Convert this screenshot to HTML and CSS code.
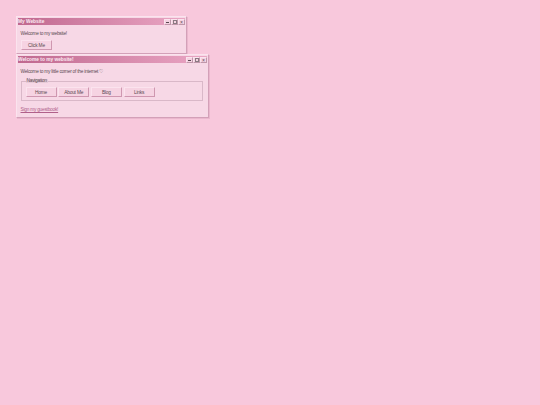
FILE: index.html
```html
<!DOCTYPE html>
<html lang="en">
<head>
  <meta charset="UTF-8">
  <title>My Website</title>
  <link rel="stylesheet" href="styles.css">
</head>
<body>
  <div class="window window-small">
    <div class="title-bar">
      <span class="title-text">My Website</span>
      <div class="title-controls">
        <button class="ctl ctl-min"><i></i></button>
        <button class="ctl ctl-max"><i></i></button>
        <button class="ctl ctl-close">×</button>
      </div>
    </div>
    <div class="window-body">
      <p class="line">Welcome to my website!</p>
      <button class="btn btn-click">Click Me</button>
    </div>
  </div>
  <div class="window window-main">
    <div class="title-bar">
      <span class="title-text">Welcome to my website!</span>
      <div class="title-controls">
        <button class="ctl ctl-min"><i></i></button>
        <button class="ctl ctl-max"><i></i></button>
        <button class="ctl ctl-close">×</button>
      </div>
    </div>
    <div class="window-body">
      <p class="line">Welcome to my little corner of the internet ♡</p>
      <fieldset class="nav-group">
        <legend>Navigation</legend>
        <div class="nav-row">
          <button class="btn">Home</button>
          <button class="btn">About Me</button>
          <button class="btn">Blog</button>
          <button class="btn">Links</button>
        </div>
      </fieldset>
      <a class="guestbook" href="#">Sign my guestbook!</a>
    </div>
  </div>
</body>
</html>
```

FILE: styles.css
```css
body {
  margin: 0;
  padding: 16px;
  background-color: #f8c8dc;
  font-family: "Liberation Sans", Arial, sans-serif;
  font-size: 4.8px;
  letter-spacing: -0.25px;
  color: #5a4a52;
}
.window {
  box-sizing: border-box;
  background-color: #f7d8e6;
  border: 1px solid;
  border-color: #fbe3ee #d3a0b8 #d3a0b8 #fbe3ee;
  box-shadow: 1px 1px 0 #eab7cd;
  padding: 1px;
}
.window-small {
  width: 171px;
  height: 38px;
}
.window-main {
  width: 193px;
  height: 64px;
}
.title-bar {
  display: flex;
  align-items: center;
  justify-content: space-between;
  height: 7px;
  padding: 0;
  background: linear-gradient(90deg, #c0688f, #eaa6c4);
}
.title-text {
  color: #fbeaf2;
  font-weight: bold;
  letter-spacing: 0;
}
.title-controls {
  display: flex;
}
.ctl {
  display: flex;
  align-items: center;
  justify-content: center;
  box-sizing: border-box;
  width: 7px;
  height: 6px;
  margin: 0;
  padding: 0;
  background-color: #f4d2e1;
  border: 1px solid;
  border-color: #fbe3ee #c097aa #c097aa #fbe3ee;
  color: #5a4a52;
  font-size: 5px;
  line-height: 4px;
}
.ctl-min i {
  width: 3px;
  height: 1px;
  margin-top: 2px;
  background-color: #5a4a52;
}
.ctl-max i {
  box-sizing: border-box;
  width: 4px;
  height: 4px;
  border: 1px solid #8a7a82;
}
.window-body {
  padding: 3px 4px 3px 2.5px;
}
.line {
  margin: 3px 0 3px;
  line-height: 6px;
}
.btn {
  box-sizing: border-box;
  width: 31px;
  height: 10px;
  margin: 0;
  padding: 0;
  background-color: #f6d3e2;
  border: 1px solid;
  border-color: #fbe3ee #cf97b0 #cf97b0 #fbe3ee;
  font-family: inherit;
  font-size: 4.8px;
  letter-spacing: -0.2px;
  color: #5a4a52;
}
.btn-click {
  margin-left: 0.5px;
}
.nav-group {
  box-sizing: border-box;
  margin: 4px 0 6px;
  padding: 4px 4px 0;
  height: 22px;
  border: 1px solid #d9b8c8;
}
.nav-group legend {
  padding: 0 1px;
  margin-left: 0;
  line-height: 4px;
  background-color: #e8cbd8;
}
.nav-row {
  display: flex;
  gap: 1.7px;
}
.guestbook {
  color: #b0608a;
}
```
